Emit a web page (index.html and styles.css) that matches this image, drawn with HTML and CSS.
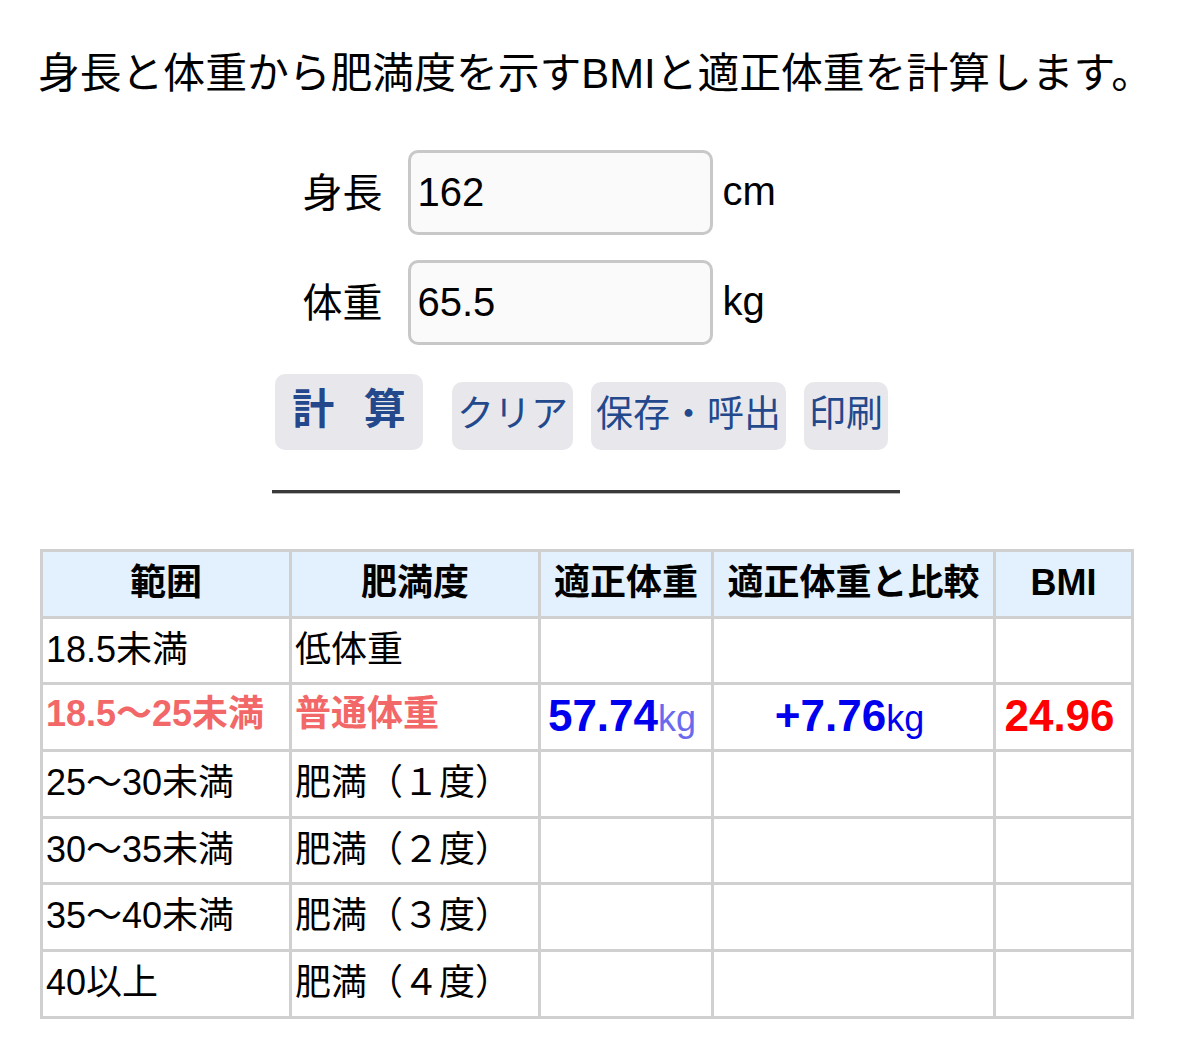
FILE: index.html
```html
<!DOCTYPE html>
<html lang="ja">
<head>
<meta charset="utf-8">
<title>BMI計算</title>
<link rel="stylesheet" href="styles.css">
</head>
<body>
<main class="page">
  <p class="intro">身長と体重から肥満度を示すBMIと適正体重を計算します。</p>

  <div class="form">
    <label class="label" for="h">身長</label>
    <input class="field" id="h" type="text" value="162">
    <span class="unit">cm</span>
    <label class="label" for="w">体重</label>
    <input class="field" id="w" type="text" value="65.5">
    <span class="unit">kg</span>
  </div>

  <div class="buttons">
    <button class="btn btn-calc">計 算</button>
    <button class="btn">クリア</button>
    <button class="btn">保存・呼出</button>
    <button class="btn">印刷</button>
  </div>

  <hr class="divider">

  <table class="result">
    <colgroup>
      <col class="c1"><col class="c2"><col class="c3"><col class="c4"><col class="c5">
    </colgroup>
    <thead>
      <tr><th>範囲</th><th>肥満度</th><th>適正体重</th><th>適正体重と比較</th><th>BMI</th></tr>
    </thead>
    <tbody>
      <tr><td>18.5未満</td><td>低体重</td><td></td><td></td><td></td></tr>
      <tr class="hit">
        <td>18.5～25未満</td><td>普通体重</td>
        <td class="num"><b class="blue">57.74</b><span class="kg light">kg</span></td>
        <td class="num"><b class="blue">+7.76</b><span class="kg">kg</span></td>
        <td class="num"><b class="red">24.96</b></td>
      </tr>
      <tr><td>25～30未満</td><td>肥満（１度）</td><td></td><td></td><td></td></tr>
      <tr><td>30～35未満</td><td>肥満（２度）</td><td></td><td></td><td></td></tr>
      <tr><td>35～40未満</td><td>肥満（３度）</td><td></td><td></td><td></td></tr>
      <tr><td>40以上</td><td>肥満（４度）</td><td></td><td></td><td></td></tr>
    </tbody>
  </table>
</main>
</body>
</html>
```

FILE: styles.css
```css
html, body {
  margin: 0;
  padding: 0;
  background: #ffffff;
}

body {
  font-family: "Liberation Sans", "Noto Sans CJK JP", sans-serif;
  color: #000;
}

.page {
  padding-top: 44px;
  padding-bottom: 20px;
}

.intro {
  margin: 0;
  font-size: 41.8px;
  line-height: 60px;
  text-align: center;
  white-space: nowrap;
  padding-left: 12px;
}

.form {
  display: grid;
  grid-template-columns: 80px 305px 153px;
  grid-auto-rows: 85px;
  row-gap: 25px;
  justify-content: center;
  align-items: center;
  margin-top: 46px;
  padding-left: 14px;
}

.label {
  font-size: 40px;
  line-height: 1;
  white-space: nowrap;
  width: 80px;
  transform: translateX(-25px);
}

.field {
  box-sizing: border-box;
  width: 305px;
  height: 85px;
  border: 3px solid #c8c8c8;
  border-radius: 10px;
  background: #fafafa;
  font-family: "Liberation Sans", "Noto Sans CJK JP", sans-serif;
  font-size: 40px;
  color: #000;
  padding: 0 0 0 7px;
  outline: none;
}

.unit {
  font-size: 40px;
  line-height: 1;
  padding-left: 10px;
  padding-bottom: 4px;
}

.buttons {
  display: flex;
  justify-content: center;
  align-items: flex-end;
  gap: 18px;
  margin-top: 29px;
  padding-right: 16px;
}

.btn {
  height: 68px;
  border: none;
  border-radius: 10px;
  background: #e8e8ec;
  color: #23498c;
  font-family: "Liberation Sans", "Noto Sans CJK JP", sans-serif;
  font-size: 37px;
  line-height: 1;
  padding: 0 5px 4px;
  cursor: pointer;
}

.btn-calc {
  height: 76px;
  width: 148px;
  font-size: 42px;
  font-weight: bold;
  word-spacing: 18px;
  margin-right: 11px;
  padding: 0 0 4px;
}

.divider {
  width: 628px;
  margin: 40px auto 0;
  border: none;
  border-top: 3px solid #3a3a3a;
  border-bottom: 1px solid #b8b8b8;
  height: 0;
  position: relative;
  left: -4px;
}

.result {
  margin: 55px 0 0 40px;
  width: 1091px;
  border-collapse: collapse;
  table-layout: fixed;
  border: 3px solid #d0d0d0;
}

.c1 { width: 249px; }
.c2 { width: 249px; }
.c3 { width: 173px; }
.c4 { width: 282px; }
.c5 { width: 138px; }

.result th,
.result td {
  border: 3px solid #d0d0d0;
  height: 61.7px;
  padding: 0 0 2px 3px;
  font-size: 36px;
  line-height: 1;
  white-space: nowrap;
  text-align: left;
}

.result th {
  background: #e3f0fd;
  font-weight: bold;
  text-align: center;
  padding: 0 0 2px 0;
}

.result tr.hit td {
  color: #f26868;
  font-weight: bold;
  height: 57.7px;
  padding-bottom: 6px;
}

.result tr.hit td.num {
  text-align: center;
  height: 61.7px;
  padding: 0 8px 2px 0;
}

.blue {
  color: #0000ee;
  font-size: 44px;
}

.red {
  color: #ff0000;
  font-size: 44px;
}

.kg {
  color: #0000ee;
  font-weight: normal;
  font-size: 36px;
}

.kg.light {
  color: #6a6aee;
}
```
